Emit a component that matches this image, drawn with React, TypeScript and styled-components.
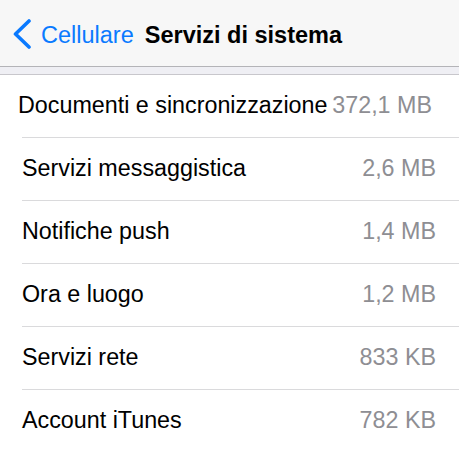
import React from "react";
import styled, { createGlobalStyle } from "styled-components";

const GlobalStyle = createGlobalStyle`
  html, body {
    margin: 0;
    padding: 0;
    background: #ffffff;
  }
  body {
    font-family: "Liberation Sans", Arial, sans-serif;
    -webkit-font-smoothing: antialiased;
  }
`;

const Screen = styled.div`
  width: 459px;
  height: 451px;
  overflow: hidden;
  background: #ffffff;
`;

const NavBar = styled.header`
  display: flex;
  align-items: center;
  height: 67px;
  box-sizing: border-box;
  padding: 4px 0 0 11px;
  background: #f7f7f7;
  border-bottom: 1px solid #b4b4b8;
`;

const BackButton = styled.button`
  display: flex;
  align-items: center;
  gap: 9px;
  border: none;
  background: none;
  padding: 0;
  margin: 0;
  color: #0a7aff;
  font-family: "Liberation Sans", Arial, sans-serif;
  font-size: 23.5px;
  line-height: 28px;
  cursor: pointer;
`;

const Chevron = styled.svg`
  width: 21px;
  height: 30px;
  margin-top: -2px;
  flex: none;
`;

const Title = styled.h1`
  margin: 0 0 0 11px;
  font-size: 23.5px;
  line-height: 28px;
  font-weight: 700;
  color: #000000;
`;

const Strip = styled.div`
  height: 7px;
  background: #efeff4;
  border-bottom: 1px solid #c8c7cc;
`;

const List = styled.ul`
  list-style: none;
  margin: 0;
  padding: 0;
`;

const Row = styled.li`
  padding-left: 22px;
`;

const RowInner = styled.div<{ $shift?: number }>`
  display: flex;
  align-items: center;
  justify-content: space-between;
  height: 63px;
  box-sizing: border-box;
  padding-right: ${(p) => 23 + (p.$shift ?? 0)}px;
  padding-bottom: 2px;
  border-bottom: 1px solid #dadadc;
  font-size: 23.3px;
  line-height: 28px;
  white-space: nowrap;
`;

const Label = styled.span<{ $shift?: number }>`
  color: #000000;
  margin-left: ${(p) => -(p.$shift ?? 0)}px;
`;

const Value = styled.span`
  color: #8e8e93;
`;

const rows: { label: string; value: string; shift?: number }[] = [
  { label: "Documenti e sincronizzazione", value: "372,1 MB", shift: 4 },
  { label: "Servizi messaggistica", value: "2,6 MB" },
  { label: "Notifiche push", value: "1,4 MB" },
  { label: "Ora e luogo", value: "1,2 MB" },
  { label: "Servizi rete", value: "833 KB" },
  { label: "Account iTunes", value: "782 KB" },
];

export default function App() {
  return (
    <>
      <GlobalStyle />
      <Screen>
        <NavBar>
          <BackButton>
            <Chevron viewBox="0 0 21 30" aria-hidden="true">
              <polyline
                points="18,2 4.5,15 18,28"
                fill="none"
                stroke="#0a7aff"
                strokeWidth="3.6"
                strokeLinecap="round"
                strokeLinejoin="round"
              />
            </Chevron>
            Cellulare
          </BackButton>
          <Title>Servizi di sistema</Title>
        </NavBar>
        <Strip />
        <List>
          {rows.map((r) => (
            <Row key={r.label}>
              <RowInner $shift={r.shift}>
                <Label $shift={r.shift}>{r.label}</Label>
                <Value>{r.value}</Value>
              </RowInner>
            </Row>
          ))}
        </List>
      </Screen>
    </>
  );
}
